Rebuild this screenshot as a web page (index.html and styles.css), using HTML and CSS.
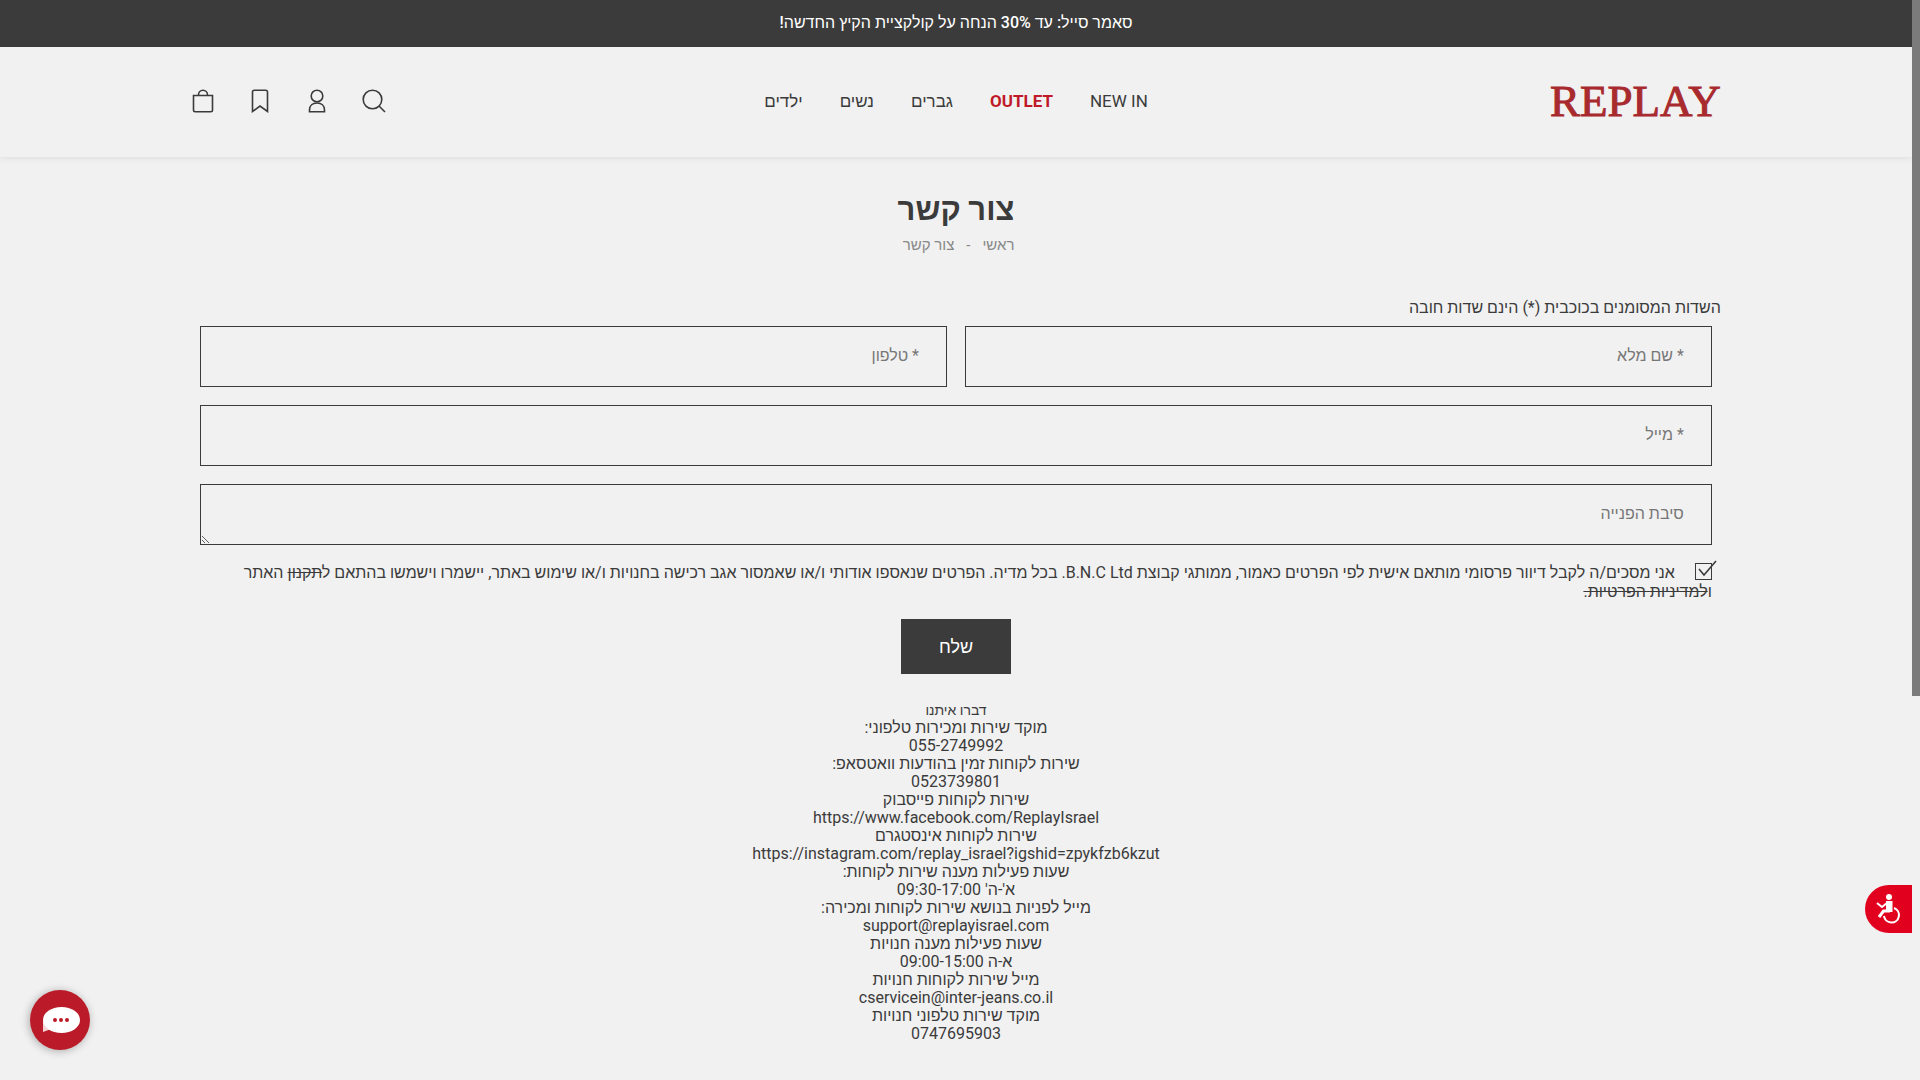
FILE: index.html
```html
<!DOCTYPE html>
<html lang="he" dir="rtl">
<head>
  <meta charset="UTF-8" />
  <meta name="viewport" content="width=device-width, initial-scale=1.0"/>
  <title>צור קשר - REPLAY</title>
  <link rel="stylesheet" href="styles.css">
</head>
<body>
  <div class="top-bar">סאמר סייל: עד 30% הנחה על קולקציית הקיץ החדשה!</div>

  <header class="header">
    <div class="container header-inner">
      <a class="logo" href="#">REPLAY</a>
      <nav class="nav">
        <a href="#">NEW IN</a>
        <a class="outlet" href="#">OUTLET</a>
        <a href="#">גברים</a>
        <a href="#">נשים</a>
        <a href="#">ילדים</a>
      </nav>
      <div class="tools">
        <button type="button" aria-label="חיפוש">
          <svg viewBox="0 0 24 24"><circle cx="10.5" cy="10.5" r="9.3"/><path d="M17 17l6 6"/></svg>
        </button>
        <a href="#" aria-label="החשבון שלי">
          <svg viewBox="0 0 24 24"><circle cx="12" cy="7" r="5.8"/><path d="M4.5 22.7v-1.700c0-4.500 3.200-7 7.500-7s7.500 2.500 7.500 7v1.700z"/></svg>
        </a>
        <a href="#" aria-label="מועדפים">
          <svg viewBox="0 0 24 24"><path d="M4.5 22.5V3a1.800 1.800 0 0 1 1.800-1.800h11.400A1.800 1.800 0 0 1 19.500 3v19.500L12 17z"/></svg>
        </a>
        <a href="#" aria-label="סל קניות">
          <svg viewBox="0 0 24 24"><path d="M2.500 6.500h19V21a1.700 1.700 0 0 1-1.700 1.700H4.200A1.700 1.700 0 0 1 2.500 21zM7.500 6.500V5.700a4.500 4.500 0 0 1 9 0v.8"/></svg>
        </a>
      </div>
    </div>
  </header>

  <main class="container">
    <div class="page-title">
      <h1>צור קשר</h1>
      <nav class="breadcrumb"><a href="#">ראשי</a><span>-</span>צור קשר</nav>
    </div>

    <p class="note">השדות המסומנים בכוכבית (*) הינם שדות חובה</p>
    <form class="form">
      <input class="field" type="text" placeholder="* שם מלא" aria-label="שם מלא">
      <input class="field" type="tel" dir="rtl" placeholder="* טלפון" aria-label="טלפון">
      <input class="field wide" type="email" placeholder="* מייל" aria-label="מייל">
      <textarea class="field wide" placeholder="סיבת הפנייה" aria-label="סיבת הפנייה"></textarea>
      <div class="consent wide">
        <span class="check">
          <input type="checkbox" id="agree" checked>
          <svg viewBox="0 0 22 20"><path d="M4 9l5 6L21 1"/></svg>
        </span>
        <label for="agree">אני מסכים/ה לקבל דיוור פרסומי מותאם אישית לפי הפרטים כאמור, ממותגי קבוצת B.N.C Ltd. בכל מדיה. הפרטים שנאספו אודותי ו/או שאמסור אגב רכישה בחנויות ו/או שימוש באתר, יישמרו וישמשו בהתאם ל<a href="#">תקנון</a> האתר<br>ו<a href="#">למדיניות הפרטיות.</a></label>
      </div>
      <button class="send wide" type="button">שלח</button>
    </form>

    <section class="contact">
      <h2>דברו איתנו</h2>
      <p>מוקד שירות ומכירות טלפוני:</p>
      <p>055-2749992</p>
      <p>שירות לקוחות זמין בהודעות וואטסאפ:</p>
      <p>0523739801</p>
      <p>שירות לקוחות פייסבוק</p>
      <p><a href="#">https://www.facebook.com/ReplayIsrael</a></p>
      <p>שירות לקוחות אינסטגרם</p>
      <p><a href="#">https://instagram.com/replay_israel?igshid=zpykfzb6kzut</a></p>
      <p>שעות פעילות מענה שירות לקוחות:</p>
      <p>א'-ה' 09:30-17:00</p>
      <p>מייל לפניות בנושא שירות לקוחות ומכירה:</p>
      <p><a href="#">support@replayisrael.com</a></p>
      <p>שעות פעילות מענה חנויות</p>
      <p>א-ה 09:00-15:00</p>
      <p>מייל שירות לקוחות חנויות</p>
      <p><a href="#">cservicein@inter-jeans.co.il</a></p>
      <p>מוקד שירות טלפוני חנויות</p>
      <p>0747695903</p>
    </section>
  </main>

  <button class="access" type="button" aria-label="נגישות">
    <svg viewBox="0 0 28 32">
      <circle cx="14" cy="4" r="3" fill="#fff"/>
      <path d="M11 8h6.500v11H11z" fill="#fff"/>
      <path d="M15 18H8.500L4 24" fill="none" stroke="#fff" stroke-width="3"/>
      <path d="M12 10l-5 4-5-4" fill="none" stroke="#fff" stroke-width="2"/>
      <path d="M19 15a7.500 7.500 0 1 1-10 8" fill="none" stroke="#fff" stroke-width="2"/>
    </svg>
  </button>

  <button class="chat" type="button" aria-label="צ'אט">
    <svg viewBox="0 0 60 60">
      <path d="M13 31v11l11-4z" fill="#f3d3d3"/>
      <ellipse cx="31.500" cy="30" rx="18.500" ry="13" fill="#fff"/>
      <g fill="#bb1a28"><circle cx="25" cy="30" r="2"/><circle cx="31" cy="30" r="2"/><circle cx="37" cy="30" r="2"/></g>
    </svg>
  </button>

  <div class="scrollbar"></div>
</body>
</html>
```
FILE: styles.css
```css
* {
  box-sizing: border-box;
}

body {
  margin: 0;
  padding-right: 8px;
  background: #f1f1f1;
  color: #3b3b3b;
  font-family: Roboto, "Liberation Sans", sans-serif;
  font-size: 16px;
  line-height: 18px;
}

a {
  color: inherit;
  text-decoration: none;
}

button,
input,
textarea {
  font: inherit;
  color: inherit;
}

.container {
  width: 80%;
  margin: 0 auto;
}

.top-bar {
  padding: 14px 0 15px;
  background: #3b3b3b;
  color: #fff;
  font-weight: 500;
  text-align: center;
}

.header {
  box-shadow: 0 2px 6px rgba(0, 0, 0, 0.07);
}

.header-inner {
  display: grid;
  grid-template-columns: 1fr auto 1fr;
  align-items: center;
  height: 110px;
  padding-bottom: 2px;
}

.logo {
  color: #a82a2e;
  font-family: "Liberation Serif", serif;
  font-size: 45px;
  line-height: 48px;
  -webkit-text-stroke: 1px #a82a2e;
}

.nav {
  display: flex;
  gap: 37px;
  font-size: 17px;
}

.nav .outlet {
  color: #c01a29;
  font-weight: 700;
}

.tools {
  display: flex;
  justify-content: flex-end;
  gap: 33px;
}

.tools a,
.tools button {
  display: flex;
  padding: 0;
  border: 0;
  background: none;
}

.tools svg {
  width: 24px;
  height: 24px;
  fill: none;
  stroke: #3b3b3b;
  stroke-width: 1.6;
}

.page-title {
  width: fit-content;
  margin: 31px auto 45px;
}

.page-title h1 {
  margin: 0;
  font-size: 31px;
  line-height: 44px;
}

.breadcrumb {
  margin-top: 4px;
  color: #888;
  font-size: 15px;
}

.breadcrumb span {
  margin: 0 12px;
}

.note {
  margin: 0 0 9px;
}

.form {
  display: grid;
  grid-template-columns: 1fr 1fr;
  gap: 18px;
  padding: 0 9px;
}

.wide {
  grid-column: 1 / -1;
}

.field {
  display: block;
  width: 100%;
  height: 61px;
  padding: 17px 27px 19px;
  border: 1px solid #3b3b3b;
  border-radius: 0;
  background: transparent;
  outline: none;
}

.field::placeholder {
  color: #777;
}

textarea.field {
  padding-top: 20px;
  overflow: hidden;
  resize: vertical;
}

.check {
  position: relative;
  display: inline-block;
  width: 17px;
  height: 17px;
  margin-left: 16px;
  vertical-align: top;
}

.check input {
  display: block;
  width: 17px;
  height: 17px;
  margin: 0;
  border: 1px solid #3b3b3b;
  appearance: none;
}

.check svg {
  position: absolute;
  top: -3px;
  left: 0;
  width: 22px;
  height: 20px;
  fill: none;
  stroke: #3b3b3b;
  stroke-width: 1.6;
  pointer-events: none;
}

.consent {
  line-height: 19px;
}

.consent a {
  text-decoration: line-through;
}

.send {
  justify-self: center;
  padding: 18px 38px;
  border: 0;
  background: #3b3b3b;
  color: #fff;
  font-size: 18px;
  font-weight: 500;
  line-height: 19px;
}

.contact {
  margin: 27px 0 36px;
  text-align: center;
}

.contact h2 {
  margin: 0;
  font-size: 14px;
  font-weight: 400;
}

.contact p {
  margin: 0;
}

.access {
  position: fixed;
  top: 885px;
  right: 8px;
  display: flex;
  align-items: center;
  justify-content: center;
  width: 47px;
  height: 48px;
  padding: 0;
  border: 0;
  border-radius: 24px 0 0 24px;
  background: #e2001f;
}

.access svg {
  width: 28px;
  height: 32px;
}

.chat {
  position: fixed;
  bottom: 30px;
  left: 30px;
  width: 60px;
  height: 60px;
  padding: 0;
  border: 0;
  border-radius: 50%;
  background: #bb1a28;
  box-shadow: -1px 1px 8px rgba(0, 0, 0, 0.3);
}

.chat svg {
  display: block;
}

.scrollbar {
  position: fixed;
  top: 0;
  right: 0;
  width: 8px;
  height: 696px;
  background: #7b7b7b;
}
```
